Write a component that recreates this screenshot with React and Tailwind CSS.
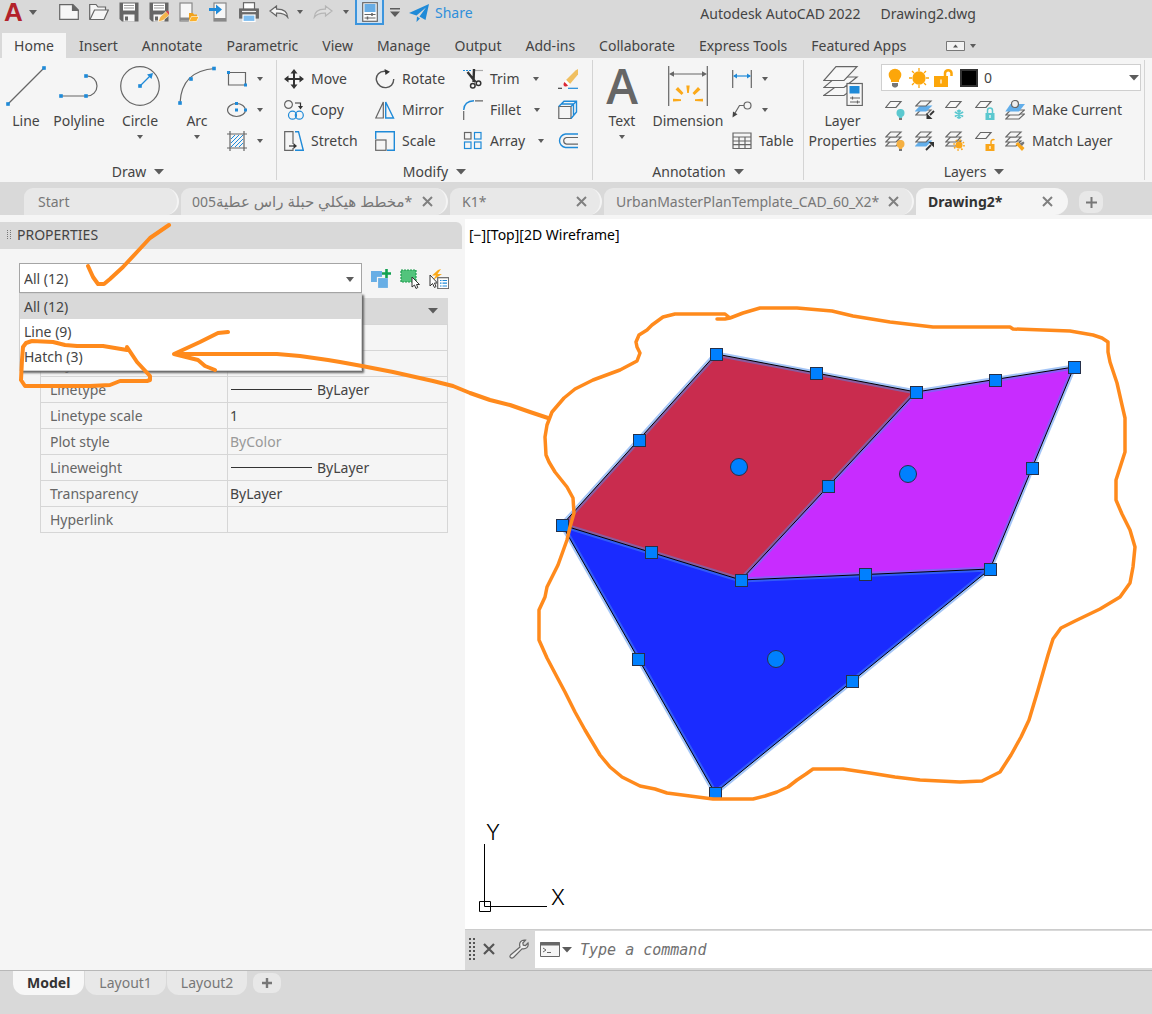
import React from "react";

const G = "#666";
const B = "#1f8ad8";

function Icon({ w = 20, h = 20, children }) {
  return (
    <svg width={w} height={h} viewBox={`0 0 ${w} ${h}`} fill="none" stroke={G} strokeWidth="1.2" className="block shrink-0" aria-hidden="true">
      {children}
    </svg>
  );
}

function Caret({ big }) {
  return big ? (
    <svg width="10" height="6" viewBox="0 0 10 6" fill="#5c5c5c" className="block shrink-0" aria-hidden="true"><path d="M0 0H10L5 5.5Z" /></svg>
  ) : (
    <svg width="6" height="4" viewBox="0 0 6 4" fill="#5c5c5c" className="block shrink-0" aria-hidden="true"><path d="M0 0H6L3 4Z" /></svg>
  );
}

const Dot = ({ x, y, s = 3.6 }) => <rect x={x - s / 2} y={y - s / 2} width={s} height={s} fill={B} stroke="none" />;

/* ---------- quick access icons ---------- */
const NewIcon = () => <Icon><path d="M.7 2.7H14L19.3 8V17.3H.7Z" fill="#f6f6f6" /><path d="M13.5 3V8.5H19Z" fill={G} /></Icon>;
const OpenIcon = () => <Icon><path d="M.7 17.5V2.5H7L9 5H16.500V8" fill="#f6f6f6" /><path d="M1 17.5 5.500 8H19.300L15 17.500Z" fill="#f6f6f6" /></Icon>;
const Floppy = () => (
  <>
    <path d="M.5.500H19.500V19.500H3L.5 17Z" fill="#666" stroke="none" />
    <rect x="4" y="1.500" width="12" height="7" fill="#fff" stroke="none" />
    <path d="M5 3.500H15M5 6H15" stroke="#999" />
    <rect x="4.500" y="12.500" width="11" height="7" fill="#f5f5f5" stroke="none" />
    <rect x="6" y="14.500" width="3" height="4" fill="#666" stroke="none" />
  </>
);
const SaveIcon = () => <Icon><Floppy /></Icon>;
const SaveAsIcon = () => <Icon><Floppy /><path d="M9 20 11 15 17 9.500 20.500 13 14 18.500Z" fill="#f3b44c" stroke="#fff" strokeWidth=".6" /><path d="M17 9.500 18.500 8.500 20 10V13Z" fill="#d8434e" stroke="none" /></Icon>;
const MobileOpenIcon = () => <Icon><rect x="1" y="1" width="12" height="18" fill="#f7f7f7" stroke="#888" /><path d="M1 17H13" strokeWidth="3" stroke="#888" /><path d="M10 19V11H14L15 12.500H18V19Z" fill="#f0a11c" stroke="none" /><path d="M10 19.500 12.500 14.500H20L17.500 19.500Z" fill="#fbb12b" stroke="#fff" strokeWidth=".6" /></Icon>;
const MobileSaveIcon = () => <Icon><rect x="5" y="1" width="12" height="18" fill="#f7f7f7" stroke="#888" /><path d="M5 17.500H17" strokeWidth="3" stroke="#888" /><path d="M0 7.500H9" stroke={B} strokeWidth="3" /><path d="M7 2.500 13 7.500 7 12.500Z" fill={B} stroke="none" /></Icon>;
const PrintIcon = () => <Icon><rect x="4.500" y=".7" width="11" height="7" fill="#fff" /><rect x=".7" y="7" width="18.600" height="9" fill="#6a6a6a" /><path d="M3 9.500H17" stroke="#eee" /><rect x="4" y="13" width="12" height="6.500" fill="#7dbdf0" stroke="#fff" /></Icon>;
const UndoIcon = ({ dim }) => (
  <svg width="20" height="14" viewBox="0 0 20 14" fill={dim ? "#dedede" : "#f5f5f5"} stroke={dim ? "#b5b5b5" : "#666"} strokeWidth="1.200" className={dim ? "block -scale-x-100" : "block"} aria-hidden="true">
    <path d="M1 6 7.500 1V4.200C14 4 18.500 6.500 18.800 12.500 16.500 9 13 8 7.500 8.200V11Z" />
  </svg>
);
const SheetIcon = () => <Icon><rect x="2.700" y=".7" width="14.600" height="18.600" fill="#fdfdfd" /><rect x="4.500" y="2" width="11" height="8" fill="#67ade6" stroke="none" /><path d="M4.500 12.500H15.500M4.500 16H15.500" /><path d="M12 11V14M7.500 14.500V17.500" strokeWidth="1.500" /></Icon>;

/* ---------- draw icons ---------- */
const LineIcon = () => <Icon w={40} h={40}><path d="M2 38 38 2" /><Dot x={2} y={38} /><Dot x={38} y={2} /></Icon>;
const PolylineIcon = () => <Icon w={40} h={40}><path d="M1 30H28A10 10 0 0 0 28 10" /><Dot x={2} y={30} /><Dot x={27} y={30} /><Dot x={27} y={10} /></Icon>;
const CircleIcon = () => <Icon w={40} h={40}><circle cx="20" cy="20" r="19.300" /><path d="M20 20 30 10" stroke={B} /><path d="M33 7 31.500 13 27 8.500Z" fill={B} stroke="none" /><Dot x={20} y={20} /></Icon>;
const ArcIcon = () => <Icon w={40} h={40}><path d="M3 37C4 16 16 4 38 2.500" /><Dot x={3} y={37} /><Dot x={14} y={13} /><Dot x={37} y={2.500} /></Icon>;
const RectIcon = () => <Icon><path d="M1.500 3.500H18.500V16H1.500Z" /><Dot x={1.500} y={3.500} s={3} /><Dot x={18.500} y={16} s={3} /></Icon>;
const EllipseIcon = () => <Icon><ellipse cx="9.500" cy="10" rx="9" ry="6.500" /><Dot x={9.500} y={10} s={3} /><Dot x={9.500} y={3.500} s={3} /><Dot x={18.500} y={10} s={3} /></Icon>;
const HatchIcon = () => <Icon><path d="M4 8 8 4M4 12 12 4M4 16 16 4M8 16 16 8M12 16 16 12" stroke={B} strokeWidth="1" /><path d="M0 3H20M0 17H20M3 0V20M17 0V20" /></Icon>;

/* ---------- modify icons ---------- */
const MoveIcon = () => <Icon><path d="M10 2V18M2 10H18" stroke="#333" strokeWidth="2" /><path d="M10 0 13.500 4.500H6.500ZM10 20 6.500 15.500H13.500ZM0 10 4.500 6.500V13.500ZM20 10 15.500 13.500V6.500Z" fill="#333" stroke="none" /></Icon>;
const CopyIcon = () => <Icon><circle cx="4.500" cy="4.500" r="3.900" /><path d="M11 3H16.500V7" stroke="#333" /><path d="M14 6H19L16.500 9.500Z" fill="#333" stroke="none" /><circle cx="8.500" cy="15.200" r="4" stroke={B} /><circle cx="15.300" cy="15.200" r="4" stroke={B} /></Icon>;
const StretchIcon = () => <Icon><path d="M9 13V.7H.7V19.300H9V17" /><path d="M11 .7H14.500L19.300 19.300H11" stroke={B} strokeWidth="1.400" /><path d="M5 15H11" stroke="#333" /><path d="M9.500 12 13 15 9.500 18Z" fill="#333" stroke="none" /></Icon>;
const RotateIcon = () => <Icon><path d="M12 2.500C4 1 .5 7 1.500 11.500 4 22 19 20.500 18.700 10" stroke="#555" strokeWidth="1.400" /><path d="M9.500 0 15 2.700 10.500 6Z" fill="#333" stroke="none" /></Icon>;
const MirrorIcon = () => <Icon><path d="M8.300 2V18H.8Z" /><path d="M10.700 2V18H18.500Z" stroke={B} strokeWidth="1.400" /></Icon>;
const ScaleIcon = () => <Icon><path d="M.7 8V.7H19.300V19.300H12" stroke={B} strokeWidth="1.400" /><rect x=".7" y="9" width="10.300" height="10.300" /></Icon>;
const TrimIcon = () => <Icon><path d="M0 1.500H9" stroke={B} strokeDasharray="2 1" /><path d="M12 1.500H20" stroke="#aaa" /><path d="M4.500 3 12.500 13M11 0 10.500 13" stroke="#333" strokeWidth="2.400" /><circle cx="9.800" cy="16.800" r="2.300" stroke="#333" strokeWidth="1.500" /><circle cx="15.500" cy="14.200" r="2.300" stroke="#333" strokeWidth="1.500" /></Icon>;
const FilletIcon = () => <Icon><path d="M.7 10C1 4 4.500 1 11 .8" stroke={B} strokeWidth="1.400" /><path d="M12 .8H20M.7 11V20" /></Icon>;
const ArrayIcon = () => <Icon><rect x="1.500" y="1.500" width="6.500" height="6.500" /><rect x="11.500" y="1.500" width="6.500" height="6.500" stroke={B} /><rect x="1.500" y="11" width="6.500" height="6.500" stroke={B} /><rect x="11.500" y="11" width="6.500" height="6.500" stroke={B} /></Icon>;
const EraseIcon = () => <Icon><path d="M8 11 17.500 1.500 20 0V5.500L12 15Z" fill="#f0bf60" stroke="none" /><path d="M8 11 12 15 10 16.500 6.500 13Z" fill="#fff" stroke="none" /><path d="M6.500 13 10 16.500C8 19 3.500 17 6.500 13Z" fill="#dc2a35" stroke="none" /><path d="M0 19.300H4" stroke="#444" /><path d="M10 19.300H20" stroke={B} /></Icon>;
const ExplodeIcon = () => <Icon><path d="M.8 6.500H13V18.500H.8Z" /><path d="M.8 6.500 6 1.200H18.500V12L13 18.500M13 6.500 18.500 1.200M3 4H15.500V15" stroke={B} strokeWidth="1.400" /></Icon>;
const OffsetIcon = () => <Icon><path d="M20 3H7.500A6.800 6.800 0 0 0 7.500 16.500H20" stroke={B} strokeWidth="1.400" /><path d="M20 6.500H8.500A3.400 3.400 0 0 0 8.500 13.200H20" /></Icon>;

/* ---------- annotation icons ---------- */
const DimensionIcon = () => (
  <Icon w={40} h={40}>
    <path d="M.7 0V40M39.300 0V40M3 8H37" />
    <path d="M1 8 6 5.200V10.800ZM39 8 34 5.200V10.800Z" fill={G} stroke="none" />
    <path d="M18.300 19.500H21.700L20.800 27H19.200ZM7.500 23.500 10 21 15.500 27 13.500 29ZM32.500 23.500 30 21 24.500 27 26.500 29ZM5 32.800 13 33.300V35L5 35.600ZM35 32.800 27 33.300V35L35 35.600Z" fill="#fba919" stroke="none" />
  </Icon>
);
const LinearIcon = () => <Icon><path d="M.7 1V19M19.300 1V19" /><path d="M2 7H18" stroke={B} /><path d="M1 7 5 4.500V9.500ZM19 7 15 4.500V9.500Z" fill={B} stroke="none" /></Icon>;
const LeaderIcon = () => <Icon><circle cx="15.500" cy="5.500" r="3.500" /><path d="M12 5.500H7.500L3 13" /><path d="M.5 17.500 1 11.500 5.500 14.200Z" fill="#444" stroke="none" /></Icon>;
const TableIcon = () => <Icon><path d="M1 2H19V17.500H1ZM1 6H19M1 10H19M1 13.700H19M7 6V17.500M13 6V17.500" /></Icon>;

/* ---------- layer icons ---------- */
const Stack = ({ fill, at }) => (
  <>
    {[10, 6, 1].map((y) => (
      <path key={y} d={`M5.500 ${y}H16L11 ${y + 5}H.8Z`} fill={y === at ? fill : "#f5f5f5"} stroke={y === at ? fill : G} />
    ))}
  </>
);
const Plane = () => <path d="M5.500 1.500H16L11 7.500H.8Z" fill="#f8f8f8" />;
const Bulb = ({ c }) => <g stroke="none"><circle cx="15.500" cy="13" r="4" fill={c} /><rect x="13.800" y="15.500" width="3.400" height="2.500" fill={c} /><rect x="14" y="18" width="3" height="2" fill="#777" /></g>;
const Lock = ({ c, open }) => <g><path d={open ? "M16 13V10.500A2.200 2.200 0 0 1 19.500 9" : "M12.500 13V10.500A2.500 2.500 0 0 1 17.500 10.500V13"} stroke={c} strokeWidth="1.500" /><rect x="10.500" y="13" width="9" height="7" fill={c} stroke="none" /><path d="M15 15V18" stroke="#fff" /></g>;
const LayOff = () => <Icon><Plane /><Bulb c="#5bc8cf" /></Icon>;
const LayIso = () => <Icon><Stack at={6} fill="#62aeea" /><path d="M19 11 15 15" stroke="#333" strokeWidth="1.800" /><path d="M11.500 19V13L17.500 19Z" fill="#333" stroke="none" /></Icon>;
const LayFreeze = () => <Icon><Plane /><path d="M14 9.500V19M9.800 12 18.200 16.500M9.800 16.500 18.200 12M12 10.500 14 12 16 10.500M12 18 14 16.500 16 18" stroke="#5bc8cf" strokeWidth="1.500" /></Icon>;
const LayLock = () => <Icon><Plane /><Lock c="#5bc8cf" /></Icon>;
const LayCurrent = () => <Icon><path d="M5.500 14H19.500L14 19H.8Z" fill="#f5f5f5" /><path d="M5.500 10H19.500L14 15H.8Z" fill="#f5f5f5" /><path d="M5.500 4H20L14 11.500H.3Z" fill="#62aeea" stroke="none" /><circle cx="10" cy="4" r="3.500" fill="#eee" /></Icon>;
const LayOn = () => <Icon><Stack /><Bulb c="#f5b041" /></Icon>;
const LayUniso = () => <Icon><Stack at={10} fill="#62aeea" /><path d="M11 19 16 14" stroke="#333" strokeWidth="1.800" /><path d="M19 11V16.500L13.500 11Z" fill="#333" stroke="none" /></Icon>;
const LayThaw = () => <Icon><Stack /><circle cx="14" cy="14" r="3.500" fill="#f9a61a" stroke="none" /><circle cx="14" cy="14" r="5" stroke="#f9a61a" strokeWidth="1.600" strokeDasharray="1.600 2.300" /></Icon>;
const LayUnlock = () => <Icon><Plane /><Lock c="#f9a61a" open /></Icon>;
const LayMatch = () => <Icon><Stack /><path d="M10.500 13 13 11 19.500 17 17 20Z" fill="#f9a61a" stroke="none" /><path d="M14.500 12.500 18.500 10.500 19.500 12 17 15Z" fill="#777" stroke="none" /></Icon>;
const LayerPropsIcon = () => (
  <Icon w={40} h={40}>
    <path d="M13 20.500H33L21 29.500H.8Z" fill="#f7f7f7" />
    <path d="M13 11H34L21 21.500H.8Z" fill="#f7f7f7" />
    <path d="M13 .7H34L21 14.500H.8Z" fill="#f7f7f7" />
    <rect x="24" y="17.500" width="15.300" height="22" fill="#f7f7f7" />
    <rect x="26.500" y="20" width="10" height="7.500" fill={B} stroke="none" />
    <path d="M27 32H37M27 36H37M29.500 30.500V33.500M34.500 34.500V37.500" />
  </Icon>
);

/* ---------- ribbon building blocks ---------- */
function Group({ label, className, children }) {
  return (
    <section className={`flex shrink-0 flex-col border-r border-[#d4d4d4] ${className}`}>
      <div className="flex h-[100px] pt-[3px]">{children}</div>
      <button className="flex h-5 items-center justify-center gap-2 pt-[3px]">
        {label}
        <Caret big />
      </button>
    </section>
  );
}

function Large({ icon, label, caret, className }) {
  return (
    <button className={`flex flex-col items-center pt-[3px] ${className}`}>
      {icon}
      <span className="mt-[5px] leading-5">{label}</span>
      {caret && <span className="mt-1"><Caret /></span>}
    </button>
  );
}

function Small({ icon, label, name, caret }) {
  return (
    <button className="flex h-[31px] items-center gap-[7px] whitespace-nowrap" aria-label={label || name}>
      {icon}
      {label}
      {caret && <span className="ml-[6px]"><Caret /></span>}
    </button>
  );
}

function IconDrop({ icon, name }) {
  return (
    <button className="flex h-[31px] items-center gap-[10px]" aria-label={name}>
      {icon}
      <Caret />
    </button>
  );
}

const menu = ["Insert", "Annotate", "Parametric", "View", "Manage", "Output", "Add-ins", "Collaborate", "Express Tools", "Featured Apps"];

function TitleBar() {
  const quick = [
    ["New", <NewIcon />], ["Open", <OpenIcon />], ["Save", <SaveIcon />], ["Save As", <SaveAsIcon />],
    ["Open from Mobile", <MobileOpenIcon />], ["Save to Mobile", <MobileSaveIcon />], ["Plot", <PrintIcon />], ["Undo", <UndoIcon />],
  ];
  return (
    <header className="flex h-8 items-start">
      <button className="flex h-6 w-[54px] items-center gap-[7px] pl-1" aria-label="Application menu">
        <span className="w-[18px] text-center font-['Liberation_Sans'] text-[26px] leading-6 font-bold text-[#b3222b]">A</span>
        <svg width="8" height="5" viewBox="0 0 8 5" fill="#5c5c5c" aria-hidden="true"><path d="M0 0H8L4 5Z" /></svg>
      </button>
      {quick.map(([name, icon]) => (
        <button key={name} aria-label={name} className="flex h-6 w-[30px] items-center justify-center">{icon}</button>
      ))}
      <button aria-label="Undo history" className="flex h-6 w-3 items-center justify-center"><Caret /></button>
      <button aria-label="Redo" className="flex h-6 w-[34px] items-center justify-center"><UndoIcon dim /></button>
      <button aria-label="Redo history" className="flex h-6 w-3 items-center justify-center"><Caret /></button>
      <button aria-label="Sheet set" className="ml-[3px] flex h-[25px] w-[29px] items-center justify-center border-2 border-t-0 border-[#3c95dd] bg-[#cfe1f1]"><SheetIcon /></button>
      <button aria-label="Customize" className="flex h-6 w-[21px] items-center justify-center">
        <svg width="10" height="9" viewBox="0 0 10 9" fill="#5c5c5c" aria-hidden="true"><path d="M0 0H10V1.500H0ZM0 3.500H10L5 9Z" /></svg>
      </button>
      <button className="ml-1 flex h-[26px] items-center gap-[6px] text-[#2f8fdb]">
        <svg width="20" height="18" viewBox="0 0 20 18" fill="#1f8ad8" aria-hidden="true"><path d="M20 0 16.500 16 10.500 12.500 17 3.500 7.500 11.500 0 9ZM8 12.500 11 14.500 7.500 18Z" /></svg>
        Share
      </button>
      <p className="mr-[176px] ml-auto flex h-7 items-center gap-5 whitespace-nowrap">
        <span>Autodesk AutoCAD 2022</span>
        <span>Drawing2.dwg</span>
      </p>
    </header>
  );
}

function Ribbon() {
  const top = [["Layer off", <LayOff />], ["Isolate", <LayIso />], ["Freeze", <LayFreeze />], ["Lock", <LayLock />]];
  const bottom = [["Layers on", <LayOn />], ["Unisolate", <LayUniso />], ["Thaw", <LayThaw />], ["Unlock", <LayUnlock />]];
  return (
    <div className="flex h-[124px] bg-[#f5f5f5] py-0.5">
      <Group label="Draw" className="w-[277px]">
        <Large className="w-[52px]" icon={<LineIcon />} label="Line" />
        <Large className="w-[54px]" icon={<PolylineIcon />} label="Polyline" />
        <Large className="w-[68px]" icon={<CircleIcon />} label="Circle" caret />
        <Large className="w-[46px]" icon={<ArcIcon />} label="Arc" caret />
        <div className="ml-[7px]">
          <IconDrop name="Rectangle" icon={<RectIcon />} />
          <IconDrop name="Ellipse" icon={<EllipseIcon />} />
          <IconDrop name="Hatch" icon={<HatchIcon />} />
        </div>
      </Group>
      <Group label="Modify" className="w-[316px]">
        <div className="grid grid-cols-[91px_88px_95px_30px] content-start pl-[7px]">
          <Small icon={<MoveIcon />} label="Move" />
          <Small icon={<RotateIcon />} label="Rotate" />
          <Small icon={<TrimIcon />} label="Trim" caret />
          <Small icon={<EraseIcon />} name="Erase" />
          <Small icon={<CopyIcon />} label="Copy" />
          <Small icon={<MirrorIcon />} label="Mirror" />
          <Small icon={<FilletIcon />} label="Fillet" caret />
          <Small icon={<ExplodeIcon />} name="Explode" />
          <Small icon={<StretchIcon />} label="Stretch" />
          <Small icon={<ScaleIcon />} label="Scale" />
          <Small icon={<ArrayIcon />} label="Array" caret />
          <Small icon={<OffsetIcon />} name="Offset" />
        </div>
      </Group>
      <Group label="Annotation" className="w-[211px]">
        <Large
          className="w-[58px]"
          icon={<span className="flex h-10 items-center font-['Open_Sans'] text-[48px] leading-none font-semibold text-[#666]" aria-hidden="true">A</span>}
          label="Text"
          caret
        />
        <Large className="w-[74px]" icon={<DimensionIcon />} label="Dimension" />
        <div className="ml-[7px]">
          <IconDrop name="Linear" icon={<LinearIcon />} />
          <IconDrop name="Leader" icon={<LeaderIcon />} />
          <Small icon={<TableIcon />} label="Table" />
        </div>
      </Group>
      <Group label="Layers" className="w-[341px]">
        <Large className="w-[77px]" icon={<LayerPropsIcon />} label={<>Layer<br />Properties</>} />
        <div className="flex flex-1 flex-col pr-[3px]">
          <button className="mt-px flex h-[27px] shrink-0 items-center border border-[#cfcfcf] bg-white pr-px pl-[3px]" aria-label="Layer 0">
            <svg width="20" height="20" viewBox="0 0 20 20" aria-hidden="true"><circle cx="10" cy="7" r="6.300" fill="#fca60a" /><path d="M6 9H14V14H6Z" fill="#fca60a" /><path d="M7 15H13V18L11 19.500H9L7 18Z" fill="#777" /></svg>
            <svg width="20" height="20" viewBox="0 0 20 20" className="ml-1" fill="#fca60a" stroke="#fca60a" strokeWidth="1.300" aria-hidden="true"><circle cx="10" cy="10" r="6" /><path d="M10 0V3M10 17V20M0 10H3M17 10H20M3 3 5 5M15 15 17 17M3 17 5 15M15 5 17 3" /></svg>
            <svg width="20" height="20" viewBox="0 0 20 20" className="ml-1" aria-hidden="true"><path d="M12 8V5A3.300 3.300 0 0 1 18.500 5V8" fill="none" stroke="#fca60a" strokeWidth="2.500" /><path d="M1 8H15V19H1Z" fill="#fca60a" /><path d="M8 11.500V15.500" stroke="#fff" strokeWidth="1.200" /></svg>
            <span className="mr-[6px] ml-[7px] h-[18px] w-[18px] border-2 border-[#333] bg-black" />
            0
            <span className="ml-auto"><Caret big /></span>
          </button>
          <div className="mt-[3px] flex items-center gap-[10px] pl-1">
            {top.map(([n, i]) => <button key={n} aria-label={n} className="flex h-[31px] items-center">{i}</button>)}
            <Small icon={<LayCurrent />} label="Make Current" />
          </div>
          <div className="flex items-center gap-[10px] pl-1">
            {bottom.map(([n, i]) => <button key={n} aria-label={n} className="flex h-[31px] items-center">{i}</button>)}
            <Small icon={<LayMatch />} label="Match Layer" />
          </div>
        </div>
      </Group>
    </div>
  );
}

function FileTab({ label, active, close = true, className }) {
  return (
    <div className={`flex h-[27px] shrink-0 items-center justify-between rounded-tl-[12px] rounded-r-[18px] border-r-2 pr-[13px] ${active ? "border-[#f5f5f5] bg-[#f5f5f5] font-bold text-[#333]" : "border-[#f4f4f4] bg-[#e8e8e8] text-[#777]"} ${className}`}>
      <button className="whitespace-nowrap">{label}</button>
      {close && (
        <button aria-label="Close tab">
          <svg width="11" height="11" viewBox="0 0 11 11" stroke="#808080" strokeWidth="2" className="block" aria-hidden="true"><path d="M1 1 10 10M10 1 1 10" /></svg>
        </button>
      )}
    </div>
  );
}

const rows = [
  ["", ""],
  ["Layer", ""],
  ["Linetype", "ByLayer", "line"],
  ["Linetype scale", "1"],
  ["Plot style", "ByColor", "dim"],
  ["Lineweight", "ByLayer", "line"],
  ["Transparency", "ByLayer"],
  ["Hyperlink", ""],
];

function Properties() {
  return (
    <aside className="flex w-[465px] shrink-0 flex-col bg-[#f5f5f5] pt-[7px] pr-[3px]">
      <h2 className="flex h-[27px] items-center gap-[6px] rounded-tr-md bg-[#d9d9d9] pb-px pl-[7px]">
        <svg width="4" height="10" viewBox="0 0 4 10" fill="#777" aria-hidden="true"><path d="M0 0H1V1H0ZM0 2H1V3H0ZM0 4H1V5H0ZM0 6H1V7H0ZM0 8H1V9H0ZM3 0H4V1H3ZM3 2H4V3H3ZM3 4H4V5H3ZM3 6H4V7H3ZM3 8H4V9H3Z" /></svg>
        PROPERTIES
      </h2>
      <div className="mt-[14px] flex items-center pl-[19px]">
        <div className="relative w-[343px]">
          <select aria-label="Selected objects" defaultValue="All (12)" className="block h-[30px] w-full appearance-none border border-[#a5a5a5] bg-white pt-0.5 pl-1">
            <option>All (12)</option>
            <option>Line (9)</option>
            <option>Hatch (3)</option>
          </select>
          <span className="pointer-events-none absolute top-[14px] right-2">
            <svg width="8" height="5" viewBox="0 0 8 5" fill="#5c5c5c" className="block" aria-hidden="true"><path d="M0 0H8L4 5Z" /></svg>
          </span>
          <ul className="absolute top-full left-0 z-10 w-full border border-[#d0d0d0] bg-white pb-px shadow-[2px_2px_2px_#666]" role="listbox" aria-label="Object types">
            <li role="option" aria-selected="true" className="flex h-[25px] items-center bg-[#d9d9d9] pl-1">All (12)</li>
            <li role="option" aria-selected="false" className="flex h-[25px] items-center pl-1">Line (9)</li>
            <li role="option" aria-selected="false" className="flex h-[25px] items-center pl-1">Hatch (3)</li>
          </ul>
        </div>
        <div className="ml-[9px] flex gap-[9px] pt-0.5">
          <button aria-label="Toggle PICKADD"><Icon><rect x="0" y="2" width="11" height="11" fill="#68aee5" stroke="none" /><rect x="6.500" y="8.500" width="11" height="11" fill="#68aee5" stroke="#f5f5f5" /><path d="M15.500 0V9M11 4.500H20" stroke="#12a150" strokeWidth="2.600" /></Icon></button>
          <button aria-label="Select objects"><Icon><rect x="1" y="1" width="15" height="12" fill="#52c47c" stroke="#1f9c4f" strokeDasharray="2 1" /><path d="M12 8V18L14.500 16 16 19.500 17.800 18.500 16.500 15.500H19.500Z" fill="#fff" stroke="#333" strokeWidth="1" /></Icon></button>
          <button aria-label="Quick select"><Icon><path d="M9 1 3 6.500H7L4 11 13 5H8.500L12 0Z" fill="#fba919" stroke="none" /><path d="M1 6V17L3.500 14.500 5.500 18.500 7 17.500 5.500 14H8.500Z" fill="#fff" stroke="#333" strokeWidth="1" /><rect x="8.700" y="8.700" width="11" height="11" fill="#fff" /><path d="M11 11.500H12.500M13.500 11.500H18M11 14.200H12.500M13.500 14.200H18M11 17H12.500M13.500 17H18" stroke={B} /></Icon></button>
        </div>
      </div>
      <div className="mt-[5px] mr-[14px] ml-[19px]">
        <div className="flex h-[26px] items-center justify-end bg-[#d9d9d9] pr-[10px]"><Caret big /></div>
        <table className="ml-[21px] w-[408px] table-fixed border-collapse">
          <tbody>
            {rows.map(([name, value, kind]) => (
              <tr key={name} className="h-[26px]">
                <th scope="row" className="w-[187px] border border-[#d6d6d6] p-0 pl-[9px] text-left leading-5 font-normal text-[#666]">{name}</th>
                <td className={`border border-[#d6d6d6] p-0 pl-[2px] leading-5 ${kind === "dim" ? "text-[#999]" : ""}`}>
                  <span className="flex items-center gap-[5px]">
                    {kind === "line" && <span className="ml-px h-px w-[81px] bg-[#333]" />}
                    {value}
                  </span>
                </td>
              </tr>
            ))}
          </tbody>
        </table>
      </div>
    </aside>
  );
}

const edges = [
  "M716 354 916 392", "M916 392 1074 367", "M1074 367 990 569", "M990 569 741 580", "M741 580 916 392",
  "M716 354 562 525", "M562 525 741 580", "M562 525 715 793", "M715 793 990 569",
];
const grips = [
  [716, 354], [816, 373], [916, 392], [995, 380], [1074, 367], [1032, 468], [990, 569], [865, 574],
  [741, 580], [828, 486], [639, 440], [562, 525], [651, 552], [638, 659], [715, 793], [852, 681],
];

function Model() {
  return (
    <svg width="687" height="679" viewBox="465 249 687 679" className="block shrink-0" role="img" aria-label="Drawing">
      <path d="M716 354 916 392 741 580 562 525Z" fill="#c92c4e" />
      <path d="M916 392 1074 367 990 569 741 580Z" fill="#c82cff" />
      <path d="M562 525 741 580 990 569 715 793Z" fill="#1a2bff" />
      <path d={edges.join("")} fill="none" stroke="#4a8cf0" strokeOpacity=".5" strokeWidth="5" />
      <path d={edges.join("")} fill="none" stroke="#000" strokeWidth="1" />
      {grips.map(([x, y]) => <rect key={`${x}-${y}`} x={x - 5.5} y={y - 5.5} width="12" height="12" fill="#0080ff" stroke="#25304a" />)}
      {[[739, 467], [908, 474], [776, 659]].map(([x, y]) => <circle key={x} cx={x} cy={y} r="8.500" fill="#0080ff" stroke="#25304a" />)}
      <path d="M484.500 844V906.500H547M479.500 901.500H490.500V911.500H479.500Z" fill="none" stroke="#000" />
      <text x="493" y="840" textAnchor="middle" className="font-['Inter'] text-[21px] font-light">Y</text>
      <text x="558" y="905" textAnchor="middle" className="font-['Inter'] text-[21px] font-light">X</text>
    </svg>
  );
}

function Markup() {
  return (
    <svg width="1152" height="755" viewBox="0 215 1152 755" className="pointer-events-none absolute top-0 left-0 z-20" fill="none" stroke="#ff8a1c" strokeWidth="3.500" strokeLinecap="round" strokeLinejoin="round" aria-hidden="true">
      <path d="M88 266 93 277 98 284H104L110 279 123 267 137 252 150 238 169 225" strokeWidth="4" />
      <path d="M23 347 26 343 32 341 53 342 65 345 77 346H103L115 348 127 350V347L137 362 150 376V380L147 381H120L110 385 90 386H25L21 380 22 360Z" strokeWidth="4" />
      <path d="M548 418 530 412 510 405 490 400 470 393 453 386 433 381 393 372 362 366 340 362 328 360 300 356 277 354H174L200 342 218 333 228 332M174 354 198 360 205 366 215 370" strokeWidth="4" />
      <path d="M717 319H725L730 318 725 314 718 314H675L663 317 652 325 647 330 639 335 636 342 637 347 640 353 637 361 620 370 593 380 575 389 564 398 552 412 547 425 545 437 546 455 549 462 555 472 567 487 573 498 574 513 570 527 567 540 558 565 547 587 545 597 539 610V640L547 658 557 677 565 692 575 712 585 730 600 755 610 767 622 777 640 786 655 789 667 793 690 796 713 799H753L765 796 777 792 788 787 797 780 806 774 813 769H843L870 773 895 777 920 780 960 782 982 781 1000 772 1011 755 1021 737 1029 720 1038 690 1048 655 1053 639 1061 628 1075 621 1100 609 1120 597 1130 583 1133 567 1135 547 1130 530 1122 514 1116 500V480L1125 452V418L1122 405 1117 383 1110 362 1108 352V342L1102 338 1093 335 1070 331 1013 329 1010 327H933L890 322 853 316 832 311 797 308H760L743 313 730 318" />
    </svg>
  );
}

function CommandBar() {
  return (
    <div className="flex h-[41px] shrink-0 items-stretch border-t border-[#ccc] bg-[#d9d9d9] pb-0.5">
      <div className="flex w-[70px] items-center pl-1">
        <svg width="6" height="22" viewBox="0 0 6 22" fill="none" stroke="#555" strokeWidth="2" strokeDasharray="2 2" aria-hidden="true"><path d="M1 0V22M5 0V22" /></svg>
        <button aria-label="Close command line" className="ml-2"><svg width="12" height="12" viewBox="0 0 12 12" stroke="#555" strokeWidth="2.200" className="block" aria-hidden="true"><path d="M1 1 11 11M11 1 1 11" /></svg></button>
        <button aria-label="Customize command line" className="ml-[14px]"><Icon><path d="M1.500 16 11 8C9.500 3.500 12.500.5 16.500 1.200L13.800 4 14.300 6.200 16.500 6.500 19 4C20 8 17 10.500 13 9.800L4.500 18.500C2 20 0 18 1.500 16Z" fill="#eee" /></Icon></button>
      </div>
      <label className="mt-px flex flex-1 items-center bg-white pl-[5px]">
        <svg width="20" height="15" viewBox="0 0 20 15" fill="#f5f5f5" stroke="#666" aria-hidden="true"><path d="M.5.500H19.500V14.500H.5Z" /><path d="M0 2H20" strokeWidth="3" /><path d="M3 6 6 8 3 10M7 10.500H11" fill="none" /></svg>
        <span className="ml-[2px]"><Caret big /></span>
        <input aria-label="Command" placeholder="Type a command" className="ml-2 min-w-0 flex-1 font-['DejaVu_Sans_Mono',monospace] text-[15px] italic outline-none placeholder:text-[#707070]" />
      </label>
    </div>
  );
}

const layoutTab = "flex h-6 items-center rounded-b-xl px-[14px] whitespace-nowrap";

export default function App() {
  return (
    <div className="flex min-h-screen flex-col overflow-hidden bg-[#d9d9d9] font-['Noto_Sans','DejaVu_Sans',sans-serif] text-[14px] leading-5 text-[#444]">
      <TitleBar />
      <nav className="flex h-[26px] items-stretch pl-[2px]">
        <button className="mt-px mr-px w-16 bg-[#f5f5f5]">Home</button>
        {menu.map((m) => <button key={m} className="px-3 pt-px whitespace-nowrap">{m}</button>)}
        <button className="ml-7 flex items-center gap-[5px] pt-0.5" aria-label="Minimize ribbon">
          <svg width="19" height="10" viewBox="0 0 19 10" fill="#f2f2f2" stroke="#777" aria-hidden="true"><path d="M.5.500H18.500V9.500H.5Z" /><path d="M7 6.500 9.500 3.500 12 6.500Z" fill="#555" stroke="none" /></svg>
          <Caret />
        </button>
      </nav>
      <Ribbon />
      <div className="flex h-[33px] shrink-0 gap-[2px] pt-[6px] pl-6">
        <FileTab label="Start" close={false} className="w-[155px] pl-[14px]" />
        <FileTab label={<span dir="ltr">005<bdi className="text-[15px]">مخطط هيكلي حبلة راس عطية</bdi>*</span>} className="w-[267px] pl-[11px]" />
        <FileTab label="K1*" className="w-[152px] pl-3" />
        <FileTab label="UrbanMasterPlanTemplate_CAD_60_X2*" className="w-[310px] pl-3" />
        <FileTab label="Drawing2*" active className="w-[152px] pl-3" />
        <button aria-label="New tab" className="mt-[3px] ml-[9px] flex h-[22px] w-6 items-center justify-center rounded-lg bg-[#e8e8e8]">
          <svg width="11" height="11" viewBox="0 0 11 11" stroke="#777" strokeWidth="2" aria-hidden="true"><path d="M5.500 0V11M0 5.500H11" /></svg>
        </button>
      </div>
      <main className="relative flex flex-1">
        <Properties />
        <div className="flex min-w-0 flex-1 flex-col border-t-4 border-[#f5f5f5] bg-white">
          <p className="flex h-[30px] items-center pt-px pl-1 whitespace-nowrap text-black">[−][Top][2D Wireframe]</p>
          <div className="min-w-0 flex-1 overflow-hidden"><Model /></div>
          <CommandBar />
        </div>
        <Markup />
      </main>
      <footer className="flex h-[44px] shrink-0 items-start border-t border-[#b8b8b8] pl-[13px]">
        <button className={`${layoutTab} bg-[#f7f7f7] font-bold text-[#333]`}>Model</button>
        <button className={`${layoutTab} ml-px bg-[#e8e8e8] text-[#777]`}>Layout1</button>
        <button className={`${layoutTab} ml-px bg-[#e8e8e8] text-[#777]`}>Layout2</button>
        <button aria-label="New layout" className="mt-[2px] ml-[6px] flex h-5 w-7 items-center justify-center rounded-lg bg-[#e8e8e8]">
          <svg width="10" height="10" viewBox="0 0 10 10" stroke="#777" strokeWidth="2.400" aria-hidden="true"><path d="M5 0V10M0 5H10" /></svg>
        </button>
      </footer>
    </div>
  );
}
